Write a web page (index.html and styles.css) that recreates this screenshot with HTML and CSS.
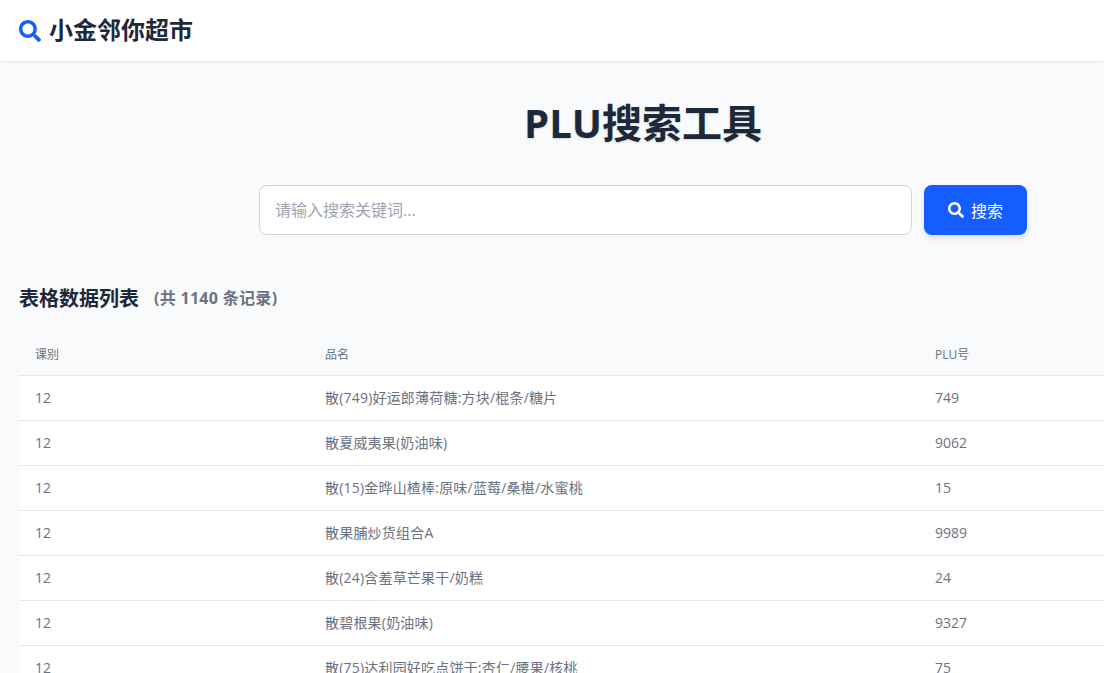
FILE: index.html
```html
<!DOCTYPE html>
<html lang="zh-CN">
<head>
   <meta charset="UTF-8">
   <meta name="viewport" content="width=device-width, initial-scale=1.0">
   <title>PLU搜索工具</title>
   <link rel="stylesheet" href="styles.css">
</head>
<body>
   <svg class="icon-defs" aria-hidden="true">
      <symbol id="icon-search" viewBox="0 0 512 512">
         <path fill="currentColor" d="M505 442.7L405.3 343c-4.5-4.5-10.6-7-17-7H372c27.6-35.3 44-79.7 44-128C416 93.1 322.9 0 208 0S0 93.1 0 208s93.1 208 208 208c48.3 0 92.7-16.4 128-44v16.3c0 6.4 2.5 12.5 7 17l99.7 99.7c9.4 9.4 24.6 9.4 33.9 0l28.3-28.3c9.4-9.4 9.4-24.6.1-34zM208 336c-70.7 0-128-57.2-128-128 0-70.7 57.2-128 128-128 70.7 0 128 57.2 128 128 0 70.7-57.2 128-128 128z"/>
      </symbol>
   </svg>

   <header class="navbar">
      <svg class="logo-icon"><use href="#icon-search"></use></svg>
      <span class="logo-text">小金邻你超市</span>
   </header>

   <main class="container">
      <h1 class="title">PLU搜索工具</h1>

      <div class="search">
         <input type="text" class="search-input" placeholder="请输入搜索关键词...">
         <button class="search-btn">
            <svg class="btn-icon"><use href="#icon-search"></use></svg>
            <span>搜索</span>
         </button>
      </div>

      <div class="list-head">
         <h2>表格数据列表</h2>
         <span class="count">(共 1140 条记录)</span>
      </div>

      <table class="data-table">
         <colgroup>
            <col class="col-type">
            <col class="col-name">
            <col>
         </colgroup>
         <thead>
            <tr><th>课别</th><th>品名</th><th>PLU号</th></tr>
         </thead>
         <tbody>
            <tr><td>12</td><td class="name">散(749)好运郎薄荷糖:方块/棍条/糖片</td><td>749</td></tr>
            <tr><td>12</td><td class="name">散夏威夷果(奶油味)</td><td>9062</td></tr>
            <tr><td>12</td><td class="name">散(15)金晔山楂棒:原味/蓝莓/桑椹/水蜜桃</td><td>15</td></tr>
            <tr><td>12</td><td class="name">散果脯炒货组合A</td><td>9989</td></tr>
            <tr><td>12</td><td class="name">散(24)含羞草芒果干/奶糕</td><td>24</td></tr>
            <tr><td>12</td><td class="name">散碧根果(奶油味)</td><td>9327</td></tr>
            <tr><td>12</td><td class="name">散(75)达利园好吃点饼干:杏仁/腰果/核桃</td><td>75</td></tr>
         </tbody>
      </table>
   </main>
</body>
</html>
```

FILE: styles.css
```css
html, body {
   margin: 0;
   height: 100%;
   overflow: hidden;
}

body {
   background-color: #f9fafb;
   color: #1d2939;
   font-family: "Open Sans", "Noto Sans CJK SC", sans-serif;
}

.icon-defs {
   display: none;
}

.navbar {
   display: flex;
   align-items: center;
   gap: 8px;
   height: 61px;
   padding: 0 19px;
   background-color: white;
   box-shadow: 0 1px 3px rgba(0, 0, 0, 0.08);
}

.logo-icon {
   width: 22px;
   height: 22px;
   color: #165dff;
}

.logo-text {
   margin-top: -4px;
   font-size: 24px;
   font-weight: 700;
}

.container {
   box-sizing: border-box;
   width: 1286px;
   padding: 31px 19px 0;
}

.title {
   margin: 0 0 31px;
   height: 62px;
   line-height: 62px;
   font-size: 40px;
   font-weight: 700;
   text-align: center;
   text-shadow: 0 1px 2px rgba(0, 0, 0, 0.15);
}

.search {
   display: flex;
   gap: 12px;
   width: 768px;
   margin: 0 auto 48px;
}

.search-input {
   flex: 1;
   box-sizing: border-box;
   height: 50px;
   padding: 0 15px;
   border: 1px solid #d1d5db;
   border-radius: 8px;
   background-color: white;
   font-family: inherit;
   font-size: 16px;
}

.search-input::placeholder {
   color: #9ca3af;
}

.search-btn {
   display: flex;
   align-items: center;
   justify-content: center;
   gap: 7px;
   width: 103px;
   height: 50px;
   border: 0;
   border-radius: 8px;
   background-color: #165dff;
   color: white;
   font-family: inherit;
   font-size: 16px;
   box-shadow: 0 4px 6px rgba(0, 0, 0, 0.1);
}

.btn-icon {
   width: 16px;
   height: 16px;
}

.list-head {
   display: flex;
   align-items: center;
   gap: 15px;
   height: 28px;
   margin-bottom: 24px;
}

.list-head h2 {
   margin: 0;
   font-size: 20px;
   font-weight: 700;
}

.count {
   color: #6b7280;
   font-size: 16px;
   font-weight: 700;
   letter-spacing: 0.3px;
}

.data-table {
   width: 100%;
   table-layout: fixed;
   border-collapse: collapse;
   background-color: white;
   box-shadow: 0 1px 2px rgba(0, 0, 0, 0.05);
}

.col-type {
   width: 290px;
}

.col-name {
   width: 610px;
}

.data-table th {
   height: 37px;
   padding: 0 16px 3px;
   background-color: #f9fafb;
   border-bottom: 1px solid #e5e7eb;
   color: #6b7280;
   font-size: 12px;
   font-weight: 400;
   text-align: left;
}

.data-table td {
   height: 42px;
   padding: 0 16px 2px;
   border-bottom: 1px solid #e5e7eb;
   color: #6b7280;
   font-size: 14px;
}

.data-table .name {
   letter-spacing: 0.2px;
}
```
